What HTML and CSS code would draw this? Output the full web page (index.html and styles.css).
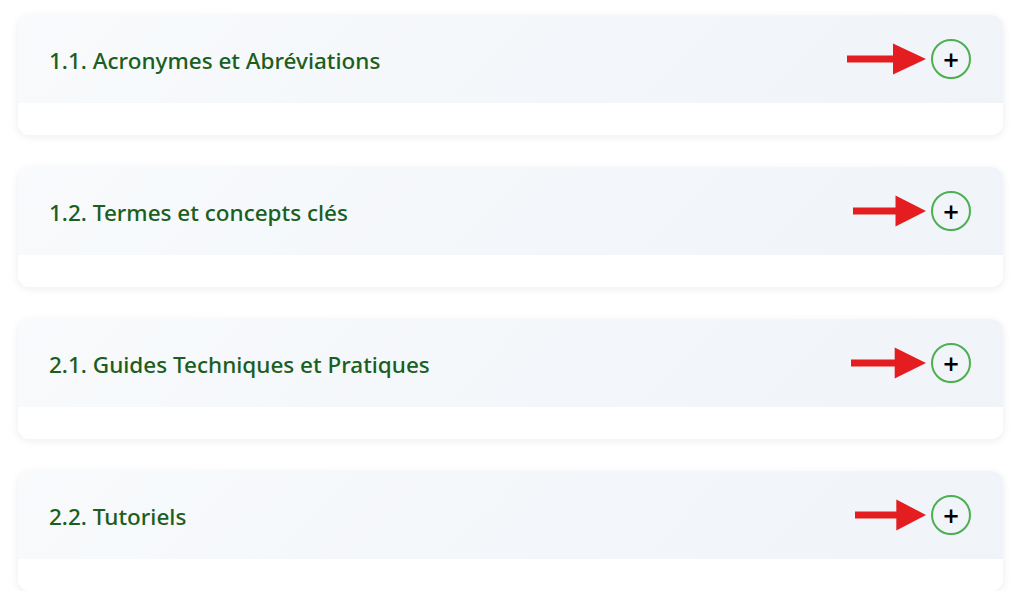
FILE: index.html
```html
<!DOCTYPE html>
<html lang="fr">
<head>
<meta charset="utf-8">
<title>Sections</title>
<link rel="stylesheet" href="styles.css">
</head>
<body>
<div class="list">
  <section class="card">
    <div class="card-header">
      <h2 class="card-title">1.1. Acronymes et Abréviations</h2>
      <div class="actions">
        <svg class="arrow arrow-a" viewBox="0 0 79 32" preserveAspectRatio="none"><path d="M46 0.5L79 16L46 31.5Z" fill="#e41e20"/><rect x="0" y="12.5" width="48" height="7" fill="#e41e20"/></svg>
        <button class="toggle">+</button>
      </div>
    </div>
    <div class="card-body"></div>
  </section>
  <section class="card">
    <div class="card-header">
      <h2 class="card-title">1.2. Termes et concepts clés</h2>
      <div class="actions">
        <svg class="arrow arrow-b" viewBox="0 0 79 32" preserveAspectRatio="none"><path d="M46 0.5L79 16L46 31.5Z" fill="#e41e20"/><rect x="0" y="12.5" width="48" height="7" fill="#e41e20"/></svg>
        <button class="toggle">+</button>
      </div>
    </div>
    <div class="card-body"></div>
  </section>
  <section class="card">
    <div class="card-header">
      <h2 class="card-title">2.1. Guides Techniques et Pratiques</h2>
      <div class="actions">
        <svg class="arrow arrow-c" viewBox="0 0 79 32" preserveAspectRatio="none"><path d="M46 0.5L79 16L46 31.5Z" fill="#e41e20"/><rect x="0" y="12.5" width="48" height="7" fill="#e41e20"/></svg>
        <button class="toggle">+</button>
      </div>
    </div>
    <div class="card-body"></div>
  </section>
  <section class="card">
    <div class="card-header">
      <h2 class="card-title">2.2. Tutoriels</h2>
      <div class="actions">
        <svg class="arrow arrow-d" viewBox="0 0 79 32" preserveAspectRatio="none"><path d="M46 0.5L79 16L46 31.5Z" fill="#e41e20"/><rect x="0" y="12.5" width="48" height="7" fill="#e41e20"/></svg>
        <button class="toggle">+</button>
      </div>
    </div>
    <div class="card-body"></div>
  </section>
</div>
</body>
</html>
```
FILE: styles.css
```css
* { box-sizing: border-box; }
html, body { margin: 0; padding: 0; background: #ffffff; }
body { font-family: "Noto Sans", "Open Sans", sans-serif; }

.list {
  display: flex;
  flex-direction: column;
  gap: 32px;
  padding: 15px 12px 0 18px;
}

.card {
  background: #ffffff;
  border-radius: 12px;
  box-shadow: 0 2px 8px rgba(15, 23, 42, 0.08);
  overflow: hidden;
}

.card-header {
  height: 88px;
  display: flex;
  align-items: center;
  justify-content: space-between;
  padding: 0 32px 0 31px;
  background: linear-gradient(135deg, #f8fafc 0%, #f0f4f9 100%);
}

.card-title {
  margin: 0;
  padding-top: 2px;
  font-size: 22.5px;
  font-weight: 500;
  color: #1b5e20;
  letter-spacing: 0;
}

.actions {
  display: flex;
  align-items: center;
  gap: 5px;
}

.arrow { display: block; height: 32px; }
.arrow-a { width: 79px; }
.arrow-b { width: 73px; }
.arrow-c { width: 75px; }
.arrow-d { width: 71px; }

.toggle {
  width: 40px;
  height: 40px;
  border-radius: 50%;
  border: 2px solid #4caf50;
  background: transparent;
  color: #000;
  font-family: "DejaVu Sans", sans-serif;
  font-size: 21px;
  font-weight: 700;
  line-height: 1;
  display: flex;
  align-items: center;
  justify-content: center;
  padding: 2px 0 0 0;
}

.card-body { height: 32px; background: #ffffff; }
```
